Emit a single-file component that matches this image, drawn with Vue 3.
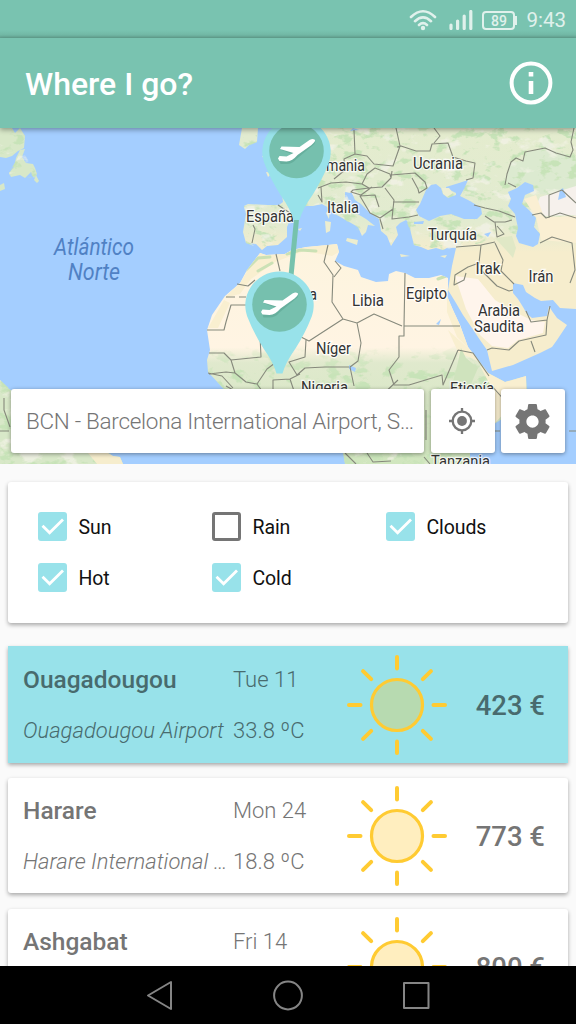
<script setup>
const filters = [
  { label: 'Sun', on: true },
  { label: 'Rain', on: false },
  { label: 'Clouds', on: true },
  { label: 'Hot', on: true },
  { label: 'Cold', on: true },
]
const trips = [
  { city: 'Ouagadougou', airport: 'Ouagadougou Airport', day: 'Tue 11', temp: '33.8 ºC', price: '423 €', selected: true },
  { city: 'Harare', airport: 'Harare International Airport', day: 'Mon 24', temp: '18.8 ºC', price: '773 €' },
  { city: 'Ashgabat', airport: 'Ashgabat Airport', day: 'Fri 14', temp: '24.1 ºC', price: '800 €' },
]
const rays = [0, 45, 90, 135, 180, 225, 270, 315]
const pins = [
  { x: 296.5, y: 151 },
  { x: 279.5, y: 304.5 },
]
const countries = [
  { t: 'mania', x: 326, y: 170.5, w: 39 },
  { t: 'Ucrania', x: 413, y: 168.5, w: 50 },
  { t: 'Italia', x: 327, y: 212.5, w: 32 },
  { t: 'España', x: 246, y: 222, w: 48 },
  { t: 'Turquía', x: 428, y: 239.5, w: 49 },
  { t: 'Irak', x: 475.5, y: 273.5, w: 25 },
  { t: 'Irán', x: 528.5, y: 282, w: 25 },
  { t: 'a', x: 309, y: 300, w: 8 },
  { t: 'Libia', x: 352, y: 306, w: 32 },
  { t: 'Egipto', x: 406, y: 299, w: 41 },
  { t: 'Arabia', x: 478, y: 315.5, w: 42 },
  { t: 'Saudita', x: 474, y: 332, w: 50 },
  { t: 'Níger', x: 316, y: 353.5, w: 35 },
  { t: 'Nigeria', x: 301, y: 392.5, w: 47 },
  { t: 'Etiopía', x: 450, y: 393.5, w: 44 },
  { t: 'Tanzania', x: 431, y: 467, w: 59 },
]
</script>

<template>
  <div class="screen">
    <header class="status">
      <svg class="wifi" viewBox="0 0 28 22">
        <g fill="none" stroke="currentColor" stroke-width="2.600" stroke-linecap="round">
          <path d="M2 8Q14-3.5 26 8M6 12.2Q14 4.6 22 12.2M10 16Q14 12.4 18 16" />
        </g>
        <circle cx="14" cy="19" r="2.200" fill="currentColor" />
      </svg>
      <svg class="signal" viewBox="0 0 24 20">
        <path d="M2 15v3.500M8.600 11v7.500M15.200 6v12.500M21.800 1.500v17" stroke="currentColor" stroke-width="3.200" stroke-linecap="round" />
      </svg>
      <span class="battery">89</span>
      <span class="clock">9:43</span>
    </header>

    <div class="appbar">
      <h1>Where I go?</h1>
      <svg class="info" viewBox="0 0 44 44">
        <circle cx="22" cy="22" r="19.400" fill="none" stroke="#fff" stroke-width="4" />
        <path d="M19.700 11h4.600v4.400h-4.600zM19.700 20h4.600v13h-4.600z" fill="#fff" />
      </svg>
    </div>

    <section class="map">
      <svg class="world" viewBox="0 128 576 336">
        <defs>
          <filter id="mottle" x="0" y="0" width="100%" height="100%" color-interpolation-filters="sRGB">
            <feTurbulence type="fractalNoise" baseFrequency=".065 .1" numOctaves="4" seed="8" />
            <feColorMatrix values="0 0 0 0 .78  0 0 0 0 .89  0 0 0 0 .72  8 0 0 0 -4.400" />
          </filter>
          <filter id="pale" x="0" y="0" width="100%" height="100%" color-interpolation-filters="sRGB">
            <feTurbulence type="fractalNoise" baseFrequency=".05 .08" numOctaves="4" seed="21" />
            <feColorMatrix values="0 0 0 0 .95  0 0 0 0 .95  0 0 0 0 .90  7 0 0 0 -4.100" />
          </filter>
          <linearGradient id="climate" x1="0" y1="128" x2="0" y2="464" gradientUnits="userSpaceOnUse">
            <stop offset="0" stop-color="#e4ecce" /><stop offset=".28" stop-color="#e2ebd0" />
            <stop offset=".37" stop-color="#f6edcd" /><stop offset="1" stop-color="#f6edcd" />
          </linearGradient>
          <linearGradient id="sahel" x1="0" y1="244" x2="0" y2="464" gradientUnits="userSpaceOnUse">
            <stop offset="0" stop-color="#fdf4de" /><stop offset=".47" stop-color="#fff4e3" />
            <stop offset=".54" stop-color="#e0e9cd" /><stop offset="1" stop-color="#d0e6be" />
          </linearGradient>
          <linearGradient id="fadeIn" x1="0" y1="345" x2="0" y2="375" gradientUnits="userSpaceOnUse">
            <stop offset="0" stop-color="#000" /><stop offset="1" stop-color="#fff" />
          </linearGradient>
          <mask id="tropics"><rect x="200" y="345" width="290" height="119" fill="url(#fadeIn)" /></mask>
          <clipPath id="north">
            <path d="M290 128H576V235L540 246 500 238 476 244 456 247 443 250 414 245 411 233 406 220 396 227 391 245 379 219 355 200 352 193 345 192 356 213 375 226 362 234 344 219 329 208 322 204 297 208 285 237 262 249 246 243 244 206 281 205ZM0 128H25V136L24 148 0 157ZM22 150L37 174 34 178 10 176 9 173ZM0 380L13 392V453H110L123 464H0ZM242 128H257V142L243 148ZM345 453H470V464H345Z" />
          </clipPath>
          <clipPath id="african"><use href="#africa" /></clipPath>
        </defs>
        <rect y="128" width="576" height="336" fill="#a4ceff" />

        <!-- Americas -->
        <g fill="#d8e8c8">
          <path d="M0 128H20L25 136 24 148 18 151 12 156 6 158 0 157ZM20 150L25 149 22 157 26 163 33 164 35 168 37 174 34 178 31 172 25 178 20 175 11 177 9 173 14 167 16 158ZM36 175L39 181 37 183 34 180ZM0 185L4 183 5 189 0 191Z" />
          <path d="M0 380L5 386 13 392V453H108L113 456 120 457 123 464H0Z" />
        </g>

        <!-- Europe and Asia -->
        <path fill="url(#climate)" d="M286 128H576V309L560 308 553 300 541 301 535 298 526 292 523 285 513 283 513 293 518 299 523 307 527 314 532 318 547 316 549 306 552 311 557 318 567 325 557 340 552 347 540 353 513 365 492 371 487 350 480 340 472 328 463 315 456 303 448 290 452 266 456 248 449 247 443 250 436 248 428 250 421 247 414 245 411 233 409 223 406 220 400 223 396 227 398 235 391 246 387 236 381 231 379 219 370 213 361 204 355 200 352 193 345 192 345 198 350 203 356 213 366 219 375 226 368 225 366 232 362 236 358 227 344 219 335 214 329 208 322 204 313 206 305 206 297 208 292 215 287 227 287 237 278 245 267 246 262 250 256 244 246 243 243 232 246 214 244 206 248 204 268 205 279 205 283 202 282 194 286 190Z" />
        <path d="M242 128H258L257 142 250 144 245 149 239 145Z" fill="#e2ebd0" />
        <path d="M266 172L272 173 268 177ZM264 159L262 156 266 157ZM325 221L331 222 330 231 326 233ZM347 238L358 240 357 245 346 241ZM326 213L330 209 329 219ZM400 254L410 256 401 257ZM440 256L447 255 445 258ZM298 229L302 228 300 231Z" fill="#ecedcf" />
        <path d="M505 185L507 174 511 162 523 161 525 152 545 148 576 158V202L560 196 540 194 533 185 525 182 516 187Z" fill="#dcead0" />

        <!-- Africa -->
        <path id="africa" fill="url(#sahel)" d="M260 253L266 255 285 254 292 250 306 247 328 245 337 244 339 252 335 261 344 266 358 270 361 277 376 282 388 281 389 274 396 271 405 273 415 278 429 278 441 275 448 278 448 288 447 296 453 310 460 325 468 347 480 362 488 373 505 382 526 376 527 390 514 407 502 419 494 424 481 440 470 453V464H345L343 453 330 440 323 415 300 392 262 391 237 399 223 388 208 372 207 360 210 350 207 330 212 315 225 296 240 283 247 270Z" />
        <g clip-path="url(#african)">
          <g mask="url(#tropics)"><rect x="200" y="345" width="290" height="119" filter="url(#mottle)" /></g>
          <path d="M224 298L240 283 249 268 260 253 337 243 339 252 332 256 304 251 275 262 251 279 240 294ZM208 328L224 300 230 303 218 328ZM480 366L526 370V390L494 424 477 437 493 390ZM447 288L462 320 470 350 457 337 447 312ZM448 330L470 350 480 362 458 352Z" fill="#f9efd0" />
          <path d="M246 270L258 258 270 257M258 271L272 263M287 254L300 250 316 251M438 279L446 276" stroke="#cbe1b5" stroke-width="3" stroke-linecap="round" fill="none" />
          <path d="M461 348L466 358 478 368 471 384 452 386 458 362Z" fill="#cfe3bd" />
        </g>
        <g clip-path="url(#north)">
          <rect y="128" width="576" height="336" filter="url(#mottle)" />
          <rect y="128" width="576" height="336" filter="url(#pale)" opacity=".8" />
        </g>
        <path d="M540 197L576 186V215L545 216 536 206Z" fill="#f6f1ec" />
        <path d="M524 199L536 195 544 217 576 216V243L541 240 536 217Z" fill="#faefd3" />
        <path d="M455 276L478 279 495 300 515 312 531 320 545 322 543 333 518 340 508 348 492 346 480 335 466 309Z" fill="#fff5ec" />
        <path d="M88 453H108L113 456 120 457 123 464H97Z" fill="#f6edcd" />
        <path d="M495 238L512 236 516 248 513 258 506 250Z" fill="#e0e8c6" />

        <!-- Inland seas -->
        <g fill="#a4ceff">
          <path d="M426 190L431 185 436 184 441 188 443 194 448 198 456 195 456 193 446 188 446 187 459 183 468 180 464 189 460 196 470 201 481 208 482 214 477 219 464 219 451 214 440 216 429 221 419 216 416 210 420 204Z" />
          <path d="M508 192L517 188 525 182 533 185 534 191 525 195 522 204 529 210 536 218 534 227 540 234 538 244 533 247 519 243 516 236 518 228 515 214 508 206 511 199Z" />
          <path d="M414 222L424 221 423 224 414 224ZM349 365L356 368 355 372 349 369ZM484 234L491 232 488 237ZM560 190L563 188 566 197 558 200ZM436 324L441 319 439 325ZM353 128L359 130 350 131ZM12 128L15 133 20 128Z" />
        </g>
        <path d="M442 188L449 188 453 193 447 197 443 194Z" fill="#edeed4" />

        <!-- Borders -->
        <g class="border">
          <path d="M354 130L355 154 344 159 345 170 334 179M355 154L367 156 374 164 393 166 400 146 396 128M397 147L401 146 416 151 430 151 432 144 448 143 453 157 466 161 475 163 473 178 466 180M434 128L440 136 434 143M505 185L507 174 511 162 516 158 523 161 525 152 545 148 556 153 570 157 573 150 571 142 574 128M508 183L516 187" />
          <path d="M318 188L331 183 346 182 362 184 367 174 375 168 390 174 391 178 382 187 369 188 362 184M391 178L392 171M369 188L353 190 351 192 361 195 372 187M391 175L415 173 425 182 427 188 419 193 418 189 412 178M385 188L394 200 393 209 380 218 370 213 360 196 375 195 379 207M393 202L419 202M393 209L392 219 409 217 418 215M380 219L383 229M321 187L322 202 318 195M278 205L290 213" />
          <path d="M253 225L255 229 252 243M474 205L485 208 499 211 515 217M485 216L494 222 505 222 512 220M495 222L497 237 504 234 497 226M495 242L481 245 456 247M481 245L479 263 468 267 455 275 454 285 464 280 466 273M480 269L497 286 509 291 513 290M495 243L503 260 501 271 514 284M532 215L541 213 546 218 560 213 576 218M549 218V195L562 190 576 203M540 243L552 237 572 243 575 270 570 283" />
          <path d="M276 254L280 271M237 284L248 286 255 280M207 330H224L226 322 231 305H246M328 245L324 262 333 275 332 302 343 319 309 341 301 337M335 261L341 268 334 277M405 273L404 326H460M402 326L374 314 357 323 343 319M404 326V336H399V357L389 370 394 385 409 385 442 375 443 385 458 350M357 323L361 343 358 361 350 367 354 386M306 340L305 357 289 362 297 375 305 368 325 367 349 367M260 335L261 357 231 360 224 353H209M231 360L235 373 246 382 257 384 267 369 275 363M208 373L222 376 233 388M273 391V380L290 379 300 374M290 379L294 391M257 384L262 391M226 386L235 391M235 373L226 372 209 374M398 380L378 399M458 350L473 353 489 376M487 350L492 348 509 350 519 341 546 335 547 320 531 322 526 311M531 341L535 352M547 320L550 306" />
          <path d="M4 398V410L10 427M345 453L356 464M426 410V440M367 453L373 462 391 461M424 457L430 464M491 385L506 402" />
          <path d="M0 431H14M491 431H576M226 297H246" stroke-dasharray="9 4" />
        </g>

        <g class="ocean">
          <text x="54" y="255" textLength="80" lengthAdjust="spacingAndGlyphs">Atlántico</text>
          <text x="68" y="280" textLength="52" lengthAdjust="spacingAndGlyphs">Norte</text>
        </g>
        <g class="countries">
          <text v-for="c in countries" :key="c.t" :x="c.x" :y="c.y" :textLength="c.w" lengthAdjust="spacingAndGlyphs">{{ c.t }}</text>
        </g>

        <path d="M297 214L291 276" stroke="#76c2ad" stroke-width="5" />
        <g v-for="p in pins" :key="p.y" :transform="`translate(${p.x} ${p.y})`">
          <path d="M-31 15A34.200 33.700 0 1 1 31 15Q26 28 16 44Q6 58 3 69H-3Q-6 58-16 44Q-26 28-31 15Z" fill="#98e2ea" />
          <circle r="27.300" fill="#76c0ae" />
          <path d="M-18 8L-17 5-10 5-3 2-16-3-15-5 3-5 12-11 18-12 17-9-1 6Q-5 11-11 11L-17 11Z" transform="translate(1 2)" fill="#4f9785" opacity=".4" />
          <path d="M-18.500 7.500L-17 5-10 5.500-3 2-16.500-2-15-4.500 3-4 13-11Q16-12.500 18-11.500T15-6L1 4Q-4 10-10 10.500L-17 10Z" fill="#fff" />
        </g>
      </svg>

      <div class="search">
        <div class="field">BCN - Barcelona International Airport, Spain</div>
        <button class="tool" aria-label="Locate">
          <svg class="locate" viewBox="0 0 28 28">
            <g fill="none" stroke="#757575" stroke-width="2.300">
              <circle cx="14" cy="14" r="9.300" /><path d="M14 1v4M14 23v4M1 14h4M23 14h4" />
            </g>
            <circle cx="14" cy="14" r="4.900" fill="#757575" />
          </svg>
        </button>
        <button class="tool" aria-label="Settings">
          <svg class="gear" viewBox="2 2 20 20">
            <path fill="#757575" d="M19.430 12.980c.04-.32.07-.64.07-.98s-.03-.66-.07-.98l2.110-1.650c.19-.15.24-.42.12-.64l-2-3.460c-.12-.22-.39-.3-.61-.22l-2.490 1c-.52-.4-1.080-.73-1.690-.98l-.38-2.650C14.460 2.180 14.250 2 14 2h-4c-.25 0-.46.18-.49.42l-.38 2.650c-.61.25-1.170.59-1.690.98l-2.490-1c-.23-.09-.49 0-.61.22l-2 3.460c-.13.22-.07.49.12.64l2.110 1.650c-.04.32-.07.65-.07.98s.03.66.07.98l-2.110 1.650c-.19.15-.24.42-.12.64l2 3.460c.12.22.39.3.61.22l2.490-1c.52.4 1.080.73 1.690.98l.38 2.650c.03.24.24.42.49.42h4c.25 0 .46-.18.49-.42l.38-2.650c.61-.25 1.170-.59 1.690-.98l2.490 1c.23.09.49 0 .61-.22l2-3.460c.12-.22.07-.49-.12-.64l-2.110-1.650zM12 15.500c-1.930 0-3.500-1.570-3.500-3.500s1.570-3.500 3.500-3.500 3.500 1.570 3.500 3.500-1.570 3.500-3.500 3.500z" />
          </svg>
        </button>
      </div>
    </section>

    <main class="content">
      <section class="card filters">
        <div v-for="f in filters" :key="f.label" class="option">
          <span class="box" :class="{ on: f.on }">
            <svg v-if="f.on" viewBox="0 0 29 29"><path d="M4.500 13.800L11.600 20.800 25 7.600" fill="none" stroke="#fff" stroke-width="2.800" /></svg>
          </span>
          <span class="label">{{ f.label }}</span>
        </div>
      </section>

      <article v-for="t in trips" :key="t.city" class="card trip" :class="{ selected: t.selected }">
        <div class="place">
          <strong>{{ t.city }}</strong>
          <em>{{ t.airport }}</em>
        </div>
        <div class="weather">
          <span>{{ t.day }}</span>
          <span>{{ t.temp }}</span>
        </div>
        <svg class="sun" viewBox="-51 -51 102 102">
          <circle r="25.500" fill="#ffc72c" fill-opacity=".3" stroke="#ffcb32" stroke-width="3.200" />
          <path v-for="r in rays" :key="r" d="M0-36.500V-48" :transform="`rotate(${r})`" stroke="#ffcb32" stroke-width="4" stroke-linecap="round" />
        </svg>
        <div class="price">{{ t.price }}</div>
      </article>
    </main>

    <nav class="navbar">
      <svg viewBox="0 0 30 32"><path d="M3 16.500L26 3V30Z" /></svg>
      <svg viewBox="0 0 30 32"><circle cx="15" cy="16.500" r="13.900" /></svg>
      <svg viewBox="0 0 30 32"><rect x="3" y="4" width="24.500" height="25" /></svg>
    </nav>
  </div>
</template>

<style>
body { background: #fafafa; }
</style>

<style scoped>
* { box-sizing: border-box; }
.screen {
  height: 1024px;
  width: 576px;
  display: flex;
  flex-direction: column;
  overflow: hidden;
  background: #fafafa;
  font-family: Roboto, sans-serif;
}
.status {
  height: 38px;
  flex: none;
  display: flex;
  align-items: center;
  justify-content: flex-end;
  padding: 1px 10px 0 0;
  color: #e0f1ec;
  background: linear-gradient(#79c3b0 0, #79c3b0 30px, #72b8a5 35px, #62a08f 38px);
}
.wifi { width: 28px; height: 22px; margin-right: 12px; }
.signal { width: 24px; height: 20px; margin-right: 9px; }
.battery {
  width: 33px;
  height: 19px;
  margin: 2px 11px 0 0;
  position: relative;
  border: 2px solid;
  border-radius: 4px;
  font-size: 14px;
  font-weight: 500;
  line-height: 16px;
  text-align: center;
}
.battery::after {
  content: '';
  position: absolute;
  right: -4px;
  top: 3px;
  width: 2px;
  height: 9px;
  background: currentColor;
}
.clock { font-size: 20.500px; line-height: 24px; }
.appbar {
  height: 90px;
  flex: none;
  display: flex;
  align-items: center;
  justify-content: space-between;
  padding: 0 23px 0 25px;
  background: #79c3b0;
  box-shadow: 0 2px 5px #0005;
  position: relative;
  z-index: 1;
}
h1 { margin: 1px 0 0; font-size: 32px; font-weight: 500; color: #fff; line-height: 40px; }
.info { width: 44px; height: 44px; }
.map { height: 336px; flex: none; display: grid; }
.world { grid-area: 1 / 1; width: 576px; height: 336px; display: block; }
.border path { fill: none; stroke: #86897c; stroke-width: 1.100; stroke-linejoin: round; }
.countries text {
  font-size: 17px;
  fill: #333;
  stroke: #fffc;
  stroke-width: 2.500px;
  paint-order: stroke;
}
.ocean text { font-size: 24px; font-style: italic; fill: #5081c4; }
.search {
  grid-area: 1 / 1;
  align-self: end;
  display: grid;
  grid-template-columns: 413px 64px 64px;
  gap: 6.500px;
  padding: 0 11px 11px;
  height: 75px;
  z-index: 1;
}
.field, .tool { background: #fff; border-radius: 3px; box-shadow: 0 1px 4px #0006; }
.field {
  padding: 0 7px 0 15px;
  font-size: 22.500px;
  letter-spacing: -.29px;
  font-weight: 300;
  line-height: 64px;
  color: #757575;
  overflow: hidden;
  white-space: nowrap;
  text-overflow: ellipsis;
}
.tool { border: 0; padding: 0; display: flex; align-items: center; justify-content: center; }
.locate { width: 28px; height: 28px; margin-right: 2px; }
.gear { width: 35px; height: 35px; margin-right: 1px; }
.content { flex: 1; min-height: 0; overflow: hidden; padding: 18px 8px 0; }
.card { background: #fff; border-radius: 3px; box-shadow: 0 2px 4px #0005; }
.filters {
  height: 141px;
  margin-bottom: 23px;
  padding: 30px 0 0 30px;
  display: grid;
  grid-template-columns: repeat(3, 174px);
  grid-auto-rows: 29px;
  row-gap: 22px;
}
.option { display: flex; align-items: center; gap: 11.500px; font-size: 19.500px; letter-spacing: -.1px; color: #111; }
.label { padding-top: 2px; }
.box { width: 29px; height: 29px; border: 3px solid #757575; border-radius: 3px; }
.box.on { border: 0; background: #98e2ea; }
.box svg { display: block; }
.trip {
  height: 115px;
  margin-bottom: 16px;
  display: grid;
  grid-template-columns: 210px 113px 102px 1fr;
  align-items: center;
  padding-left: 15px;
  color: #757575;
}
.trip.selected { background: #98e2ea; color: #486b6e; border-radius: 0; height: 117px; margin-bottom: 15px; }
.place, .weather { display: flex; flex-direction: column; gap: 23px; line-height: 28px; min-width: 0; padding-top: 2px; }
.place strong { font-size: 24.500px; font-weight: 500; }
.place em {
  font-size: 22px;
  font-weight: 300;
  white-space: nowrap;
  overflow: hidden;
  text-overflow: ellipsis;
  padding-right: 2px;
}
.weather { font-size: 22px; font-weight: 300; }
.sun { width: 102px; height: 102px; }
.price { font-size: 27.500px; font-weight: 500; padding: 1px 23px 0 0; text-align: right; white-space: nowrap; }
.navbar {
  height: 58px;
  flex: none;
  display: flex;
  justify-content: center;
  align-items: center;
  gap: 98px;
  background: #000;
}
.navbar svg { width: 30px; height: 32px; fill: none; stroke: #858585; stroke-width: 2; stroke-linejoin: round; }
</style>
